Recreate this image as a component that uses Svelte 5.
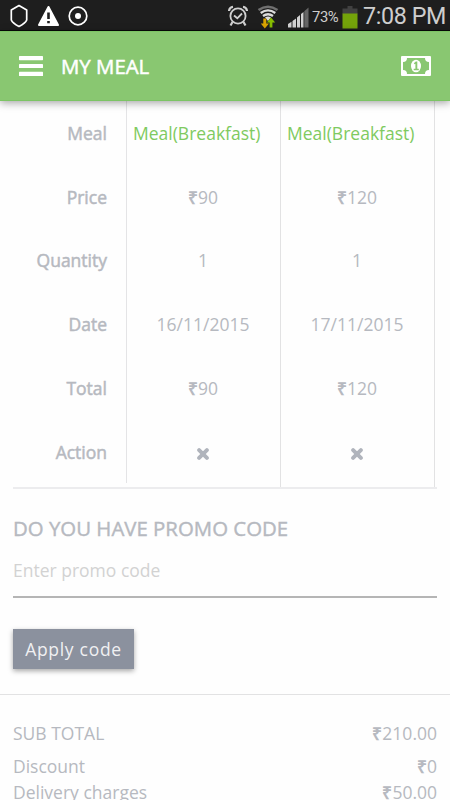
<script>
  const headings = ['Meal', 'Price', 'Quantity', 'Date', 'Total', 'Action'];

  let meals = [
    { id: 1, name: 'Meal(Breakfast)', price: 90, quantity: 1, date: '16/11/2015' },
    { id: 2, name: 'Meal(Breakfast)', price: 120, quantity: 1, date: '17/11/2015' }
  ];

  let promoCode = '';
  let discount = 0;
  const delivery = 50;

  $: subTotal = meals.reduce((sum, meal) => sum + meal.price * meal.quantity, 0);

  function removeMeal(id) {
    meals = meals.filter(meal => meal.id !== id);
  }
</script>

<div class="screen">
  <div class="status-bar">
    <div class="status-left">
      <svg width="20" height="24" viewBox="0 0 20 24">
        <path d="M10 1.5 L17.7 6 V16 Q16.5 19 10 22.5 Q3.5 19 2.3 16 V6 Z" fill="none" stroke="#fff" stroke-width="1.7" stroke-linejoin="round" />
      </svg>
      <svg width="23" height="22" viewBox="0 0 23 22">
        <path d="M11.5 2 L21 20 H2 Z" fill="#fff" stroke="#fff" stroke-width="2" stroke-linejoin="round" />
        <path d="M11.5 7.5 V14 M11.5 16 V18.2" stroke="#1e1e1e" stroke-width="2.6" />
      </svg>
      <svg width="20" height="20" viewBox="0 0 20 20">
        <circle cx="10" cy="10" r="8.8" fill="none" stroke="#fff" stroke-width="1.7" />
        <circle cx="10" cy="10" r="3" fill="#fff" />
      </svg>
    </div>
    <div class="status-right">
      <svg class="alarm" width="20" height="22" viewBox="0 0 20 22" fill="none" stroke="#cfcfcf" stroke-width="1.8">
        <circle cx="10" cy="11" r="7.6" />
        <path d="M6 10.5 L9.3 13.3 L14 8.5" />
        <path d="M1 6 Q1.3 2.3 5 1.8 M19 6 Q18.7 2.3 15 1.8 M4.5 17 L2.5 20.5 M15.5 17 L17.5 20.5" stroke-width="2.2" />
      </svg>
      <svg class="wifi" width="22" height="24" viewBox="0 0 22 24">
        <path d="M1.5 5 Q11 -1.5 20.5 5" fill="none" stroke="#707070" stroke-width="2.6" />
        <path d="M3.7 8 Q11 2.7 18.3 8 M6 11 Q11 7.5 16 11" fill="none" stroke="#dcdcdc" stroke-width="2.3" />
        <path d="M8 12.5 Q11 10.5 14 12.5 L11 16 Z" fill="#dcdcdc" />
        <path d="M6.3 13.5 H9.3 V18.5 H12 L7.8 23.5 L3.8 18.5 H6.3 Z" fill="#d9a300" />
        <path d="M12.6 22.5 H15.4 V17.5 H18.2 L14 12.5 L9.8 17.5 H12.6 Z" fill="#86bd00" />
      </svg>
      <svg class="signal" width="21" height="21" viewBox="0 0 21 21">
        <path d="M0 20.5 V17 L3.5 14.7 V20.5 Z M4.5 20.5 V14 L8 11.5 V20.5 Z M9 20.5 V10.5 L12 8 V20.5 Z M13 20.5 V7 L15.5 5 V20.5 Z" fill="#d2d2d2" />
        <path d="M16.3 20.5 V4.2 L20.5 0.5 V20.5 Z" fill="#666" />
      </svg>
      <span class="percent">73%</span>
      <svg class="battery" width="16" height="23" viewBox="0 0 16 23">
        <path d="M5.5 0 H10.5 V2.5 H15.5 V8 H0.5 V2.5 H5.5 Z" fill="#414141" />
        <rect x="0.5" y="7.5" width="15" height="15" fill="#74a30a" />
      </svg>
      <span class="clock">7:08 PM</span>
    </div>
  </div>

  <header class="app-bar">
    <button class="icon-button" aria-label="Menu">
      <svg width="24" height="20" viewBox="0 0 24 20" fill="#fff">
        <rect width="24" height="4.2" rx="0.6" />
        <rect y="7.9" width="24" height="4.2" rx="0.6" />
        <rect y="15.8" width="24" height="4.2" rx="0.6" />
      </svg>
    </button>
    <h1>MY MEAL</h1>
    <button class="icon-button" aria-label="Payment">
      <svg width="30" height="20" viewBox="0 0 30 20">
        <rect width="30" height="20" rx="1" fill="#fff" />
        <path d="M6 2 H24 Q24 6 28 6 V14 Q24 14 24 18 H6 Q6 14 2 14 V6 Q6 6 6 2 Z" fill="#89c771" />
        <ellipse cx="15" cy="10" rx="5" ry="6.3" fill="#fff" />
        <path d="M12.8 7.2 L14.8 5.6 H16.3 V12.7 H17.8 V14.2 H12.7 V12.7 H14.4 V7.8 L13.7 8.3 Z" fill="#89c771" />
      </svg>
    </button>
  </header>

  <main>
    <section class="meal-table">
      <div class="column headings">
        {#each headings as heading}
          <div class="cell">{heading}</div>
        {/each}
      </div>
      {#each meals as meal (meal.id)}
        <div class="column">
          <div class="cell name">{meal.name}</div>
          <div class="cell"><span class="rupee">₹</span>{meal.price}</div>
          <div class="cell">{meal.quantity}</div>
          <div class="cell">{meal.date}</div>
          <div class="cell"><span class="rupee">₹</span>{meal.price * meal.quantity}</div>
          <div class="cell">
            <button class="remove" aria-label="Remove" on:click={() => removeMeal(meal.id)}>
              <svg width="12" height="12" viewBox="0 0 12 12">
                <path d="M2.1 2.1 L9.9 9.9 M9.9 2.1 L2.1 9.9" stroke="#b0b4bc" stroke-width="3.9" stroke-linecap="round" />
              </svg>
            </button>
          </div>
        </div>
      {/each}
    </section>

    <section class="promo">
      <h2>DO YOU HAVE PROMO CODE</h2>
      <input type="text" placeholder="Enter promo code" bind:value={promoCode} />
      <button class="apply">Apply code</button>
    </section>

    <section class="summary">
      <div class="line sub-total">
        <span>SUB TOTAL</span>
        <span><span class="rupee">₹</span>{subTotal.toFixed(2)}</span>
      </div>
      <div class="line">
        <span>Discount</span>
        <span><span class="rupee">₹</span>{discount}</span>
      </div>
      <div class="line">
        <span>Delivery charges</span>
        <span><span class="rupee">₹</span>{delivery.toFixed(2)}</span>
      </div>
    </section>
  </main>
</div>

<style>
  :global(body) {
    background: #fefefe;
    overflow: hidden;
  }

  .screen {
    height: 800px;
    display: flex;
    flex-direction: column;
    overflow: hidden;
    font-family: 'Open Sans', sans-serif;
    font-size: 17.5px;
    font-weight: 400;
    color: #b6b9c0;
  }

  svg {
    display: block;
    flex: none;
  }

  button {
    padding: 0;
    border: none;
    background: none;
    font: inherit;
    cursor: pointer;
  }

  .status-bar {
    flex: none;
    box-sizing: border-box;
    height: 31px;
    display: flex;
    justify-content: space-between;
    background: #1e1e1e;
    border-bottom: 1px solid #080808;
    font-family: Roboto, sans-serif;
    font-weight: 400;
    color: #cecece;
  }

  .status-left {
    display: flex;
    align-items: center;
    gap: 8px;
    padding: 2px 0 0 9px;
  }

  .status-right {
    display: flex;
    align-items: center;
    padding: 2px 5px 0 0;
  }

  .wifi {
    margin: 2px 0 0 9px;
  }

  .signal {
    margin: 3px 3px 0 9px;
  }

  .percent {
    width: 28px;
    font-size: 14.8px;
    letter-spacing: -0.4px;
    margin-top: 2px;
    white-space: nowrap;
  }

  .battery {
    margin: 2px 5px 0 2px;
  }

  .clock {
    width: 82px;
    font-size: 23.3px;
    letter-spacing: -0.4px;
    white-space: nowrap;
  }

  .app-bar {
    flex: none;
    position: relative;
    box-sizing: border-box;
    height: 70px;
    display: flex;
    align-items: center;
    padding: 0 19px;
    background: #89c771;
    border-top: 1px solid #7cc464;
    border-bottom: 1px solid #7cc464;
    box-shadow: 0 2px 8px rgba(0, 0, 0, 0.35);
  }

  .app-bar h1 {
    flex: 1;
    margin: 0 0 0 18px;
    font-size: 20.4px;
    font-weight: 400;
    -webkit-text-stroke: 0.5px currentColor;
    color: #fff;
  }

  .meal-table {
    display: flex;
    align-items: flex-start;
    margin: 0 13px;
    border-bottom: 2px solid #ececee;
  }

  .column {
    box-sizing: border-box;
    width: 154px;
    height: 386px;
    padding-right: 1px;
    border-right: 1px solid #e2e2e3;
  }

  .column.headings {
    width: 114px;
    height: 382px;
    padding-right: 19px;
    border-right: 1px solid #e4e4e6;
    -webkit-text-stroke: 0.5px currentColor;
  }

  .cell {
    height: 63.8px;
    display: flex;
    align-items: center;
    justify-content: center;
    white-space: nowrap;
  }

  .headings .cell {
    justify-content: flex-end;
  }

  .cell.name {
    justify-content: flex-start;
    padding-left: 6px;
    color: #7fca60;
  }

  .rupee {
    font-weight: 600;
  }

  .remove {
    margin-top: 4px;
  }

  .promo {
    padding: 25px 13px 26px;
  }

  .promo h2 {
    margin: 0;
    font-size: 20.4px;
    line-height: 28px;
    font-weight: 400;
    -webkit-text-stroke: 0.4px currentColor;
  }

  .promo input {
    box-sizing: border-box;
    display: block;
    width: 100%;
    height: 56px;
    padding: 2px 0 0;
    border: none;
    border-bottom: 2px solid #b5b5b5;
    outline: none;
    background: none;
    font: inherit;
    color: #a6aab3;
  }

  .promo input::placeholder {
    color: #d2d2d2;
    opacity: 1;
  }

  .apply {
    display: block;
    width: 121px;
    height: 40px;
    margin-top: 31px;
    background: #8b919e;
    box-shadow: 0 2px 5px rgba(0, 0, 0, 0.35);
    font-weight: 400;
    letter-spacing: 0.7px;
    color: #f0f0f2;
  }

  .summary {
    margin-top: -1px;
    border-top: 1px solid #e2e2e3;
    padding: 25px 13px 0;
  }

  .line {
    display: flex;
    justify-content: space-between;
    line-height: 26px;
  }

  .sub-total {
    margin-bottom: 7px;
  }
</style>
